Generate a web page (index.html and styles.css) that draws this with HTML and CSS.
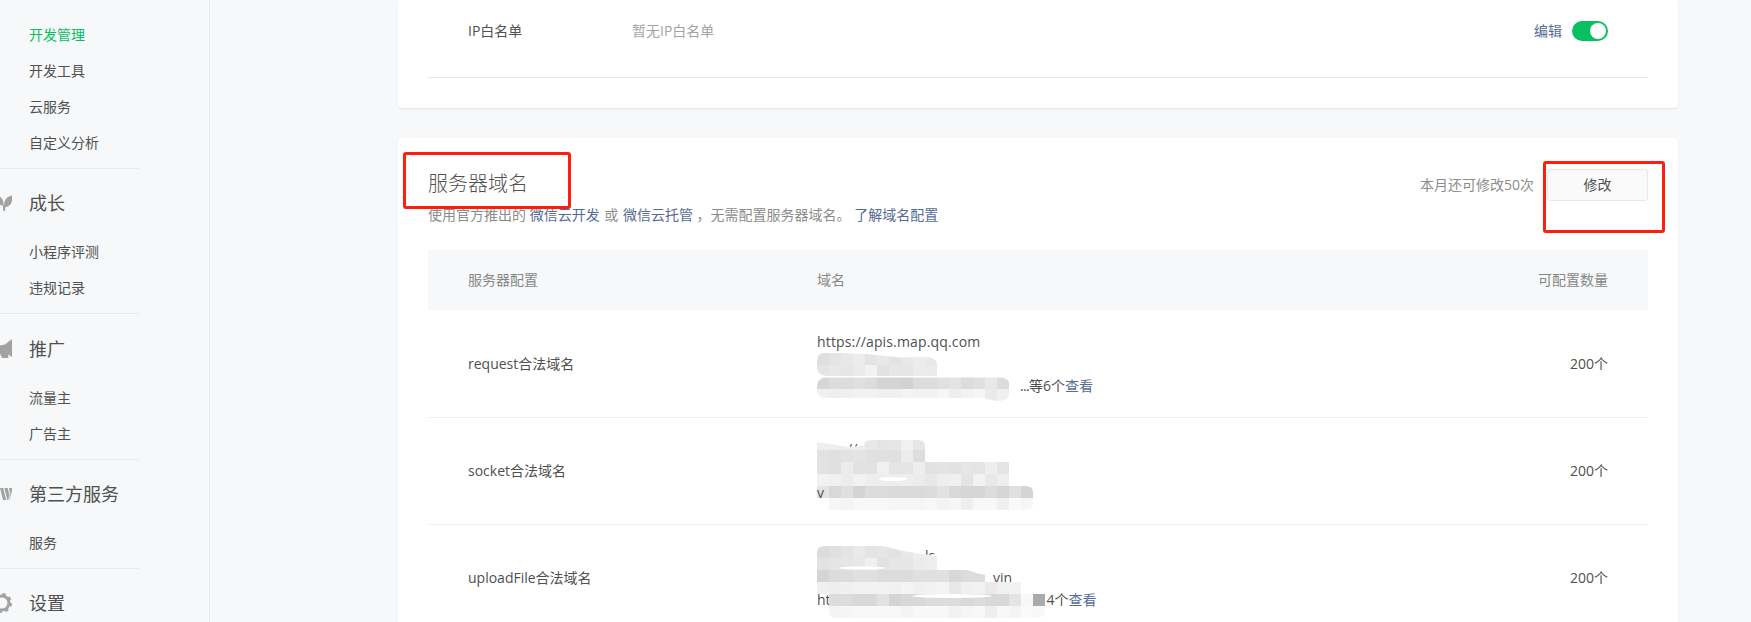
FILE: index.html
```html
<!DOCTYPE html>
<html lang="zh-CN">
<head>
<meta charset="utf-8">
<title>开发管理</title>
<link rel="stylesheet" href="styles.css">
</head>
<body>
<div class="page">
  <nav class="side">
    <ul class="nav first">
      <li class="active">开发管理</li>
      <li>开发工具</li>
      <li>云服务</li>
      <li>自定义分析</li>
    </ul>
    <div class="group">
      <h3><svg class="ico leaf" viewBox="0 0 12 16"><path d="M4.500 12.500C3 6.500 6 1.300 12.500 .3 13 7 10.500 12 4.500 12.500z"/><path d="M0 1.500C2.800 3.800 4 7 3.400 10.500 1.800 10.500 .5 10 0 9.500z"/><path d="M3 10h2.200v5.800H3z"/></svg>成长</h3>
      <ul class="nav"><li>小程序评测</li><li>违规记录</li></ul>
    </div>
    <div class="group">
      <h3 class="tall"><svg class="ico horn" viewBox="0 0 12 20"><path d="M12 0v18L8 15.500 8.500 19H2L0 14.500V6.500L5 5.500z"/></svg>推广</h3>
      <ul class="nav"><li>流量主</li><li>广告主</li></ul>
    </div>
    <div class="group">
      <h3><svg class="ico tri" viewBox="0 0 12 12"><path d="M0 0h3.200l3 12H3zM4.300 0h3.400l1.800 7.500L8.200 12H7.300zM9 0h3.500L9.800 12H9.300L10.300 7.500z"/></svg>第三方服务</h3>
      <ul class="nav"><li>服务</li></ul>
    </div>
    <div class="group">
      <h3><svg class="ico gear" viewBox="0 0 12 20"><circle class="ring" cx="2" cy="10" r="7"/><circle class="teeth" cx="2" cy="10" r="9"/></svg>设置</h3>
    </div>
  </nav>

  <main class="main">
    <section class="card top">
      <div class="ip">
        <span class="ip-name">IP白名单</span>
        <span class="ip-val">暂无IP白名单</span>
        <a class="link ip-edit">编辑</a>
        <span class="toggle"><i></i></span>
      </div>
    </section>

    <section class="card domains">
      <div class="mark mark-title"></div>
      <div class="mark mark-btn"></div>
      <header class="head">
        <div>
          <h2>服务器域名</h2>
          <p class="sub">使用官方推出的 <a class="link">微信云开发</a> <span class="or">或</span> <a class="link">微信云托管</a> ，无需配置服务器域名。 <a class="link">了解域名配置</a></p>
        </div>
        <div class="ops">
          <span class="left">本月还可修改50次</span>
          <button class="btn">修改</button>
        </div>
      </header>

      <div class="row thead">
        <span>服务器配置</span><span>域名</span><span class="num">可配置数量</span>
      </div>

      <div class="row">
        <span>request合法域名</span>
        <div class="cell">
          <svg class="blur" width="240" height="107">
            <defs>
              <clipPath id="c1a"><path d="M0 50Q0 42 8 41.500L50 43 83 46.500 107 46Q120 46 120 54V65H12Q0 65 0 56z"/></clipPath>
              <clipPath id="c1b"><path d="M0 76Q0 66.500 10 66.500H183Q193 66.500 193 76V80Q193 90 180 90L165 87H10Q0 87 0 78z"/></clipPath>
            </defs>
            <g clip-path="url(#c1a)">
              <rect x="0" y="42" fill="#dfdfdf"/><rect x="12" y="42" fill="#e4e4e4"/><rect x="24" y="42" fill="#e8e8e8"/><rect x="36" y="42" fill="#ececec"/><rect x="48" y="42" fill="#e4e4e4"/><rect x="60" y="42" fill="#e8e8e8"/><rect x="72" y="42" fill="#e2e2e2"/><rect x="84" y="42" fill="#e8e8e8"/><rect x="96" y="42" fill="#ececec"/><rect x="108" y="42" fill="#e8e8e8"/>
              <rect x="0" y="54" fill="#e4e4e4"/><rect x="12" y="54" fill="#e8e8e8"/><rect x="24" y="54" fill="#e6e6e6"/><rect x="36" y="54" fill="#ebebeb"/><rect x="48" y="54" fill="#f2f2f2"/><rect x="60" y="54" fill="#e2e2e2"/><rect x="72" y="54" fill="#e7e7e7"/><rect x="84" y="54" fill="#e6e6e6"/><rect x="96" y="54" fill="#ececec"/><rect x="108" y="54" fill="#ebebeb"/>
            </g>
            <g clip-path="url(#c1b)">
              <rect x="0" y="66" fill="#d6d6d6"/><rect x="12" y="66" fill="#dcdcdc"/><rect x="24" y="66" fill="#dcdcdc"/><rect x="36" y="66" fill="#e0e0e0"/><rect x="48" y="66" fill="#dcdcdc"/><rect x="60" y="66" fill="#d4d4d4"/><rect x="72" y="66" fill="#d4d4d4"/><rect x="84" y="66" fill="#d2d2d2"/><rect x="96" y="66" fill="#dcdcdc"/><rect x="108" y="66" fill="#dcdcdc"/><rect x="120" y="66" fill="#e0e0e0"/><rect x="132" y="66" fill="#e4e4e4"/><rect x="144" y="66" fill="#dcdcdc"/><rect x="156" y="66" fill="#e0e0e0"/><rect x="168" y="66" fill="#e8e8e8"/><rect x="180" y="66" fill="#dcdcdc"/>
              <rect x="0" y="78" fill="#f0f0f0"/><rect x="12" y="78" fill="#eeeeee"/><rect x="24" y="78" fill="#f0f0f0"/><rect x="36" y="78" fill="#f2f2f2"/><rect x="48" y="78" fill="#f2f2f2"/><rect x="60" y="78" fill="#f0f0f0"/><rect x="72" y="78" fill="#f0f0f0"/><rect x="84" y="78" fill="#f4f4f4"/><rect x="96" y="78" fill="#f2f2f2"/><rect x="108" y="78" fill="#f2f2f2"/><rect x="120" y="78" fill="#f6f6f6"/><rect x="132" y="78" fill="#eeeeee"/><rect x="144" y="78" fill="#f2f2f2"/><rect x="156" y="78" fill="#f6f6f6"/><rect x="168" y="78" fill="#eaeaea"/><rect x="180" y="78" fill="#f0f0f0"/>
            </g>
          </svg>
          <div class="url">https://apis.map.qq.com</div>
          <div>&nbsp;</div>
          <div><span class="gap g1"></span><span class="dots">...</span>等6个<a class="link">查看</a></div>
        </div>
        <span class="num">200个</span>
      </div>

      <div class="row">
        <span>socket合法域名</span>
        <div class="cell">
          <svg class="blur" width="240" height="107">
            <defs>
              <clipPath id="c2"><path d="M0 24L31 29 46 28Q47 22 55 22H100Q108 22 108 28V44H192V68H208Q216 68 216 74V86Q216 92 208 92H11Q0 92 0 82z"/></clipPath>
            </defs>
            <g clip-path="url(#c2)">
              <rect x="0" y="20" fill="#eeeeee"/><rect x="12" y="20" fill="#eeeeee"/><rect x="24" y="20" fill="#eeeeee"/><rect x="36" y="20" fill="#eeeeee"/><rect x="48" y="20" fill="#e8e8e8"/><rect x="60" y="20" fill="#e4e4e4"/><rect x="72" y="20" fill="#e6e6e6"/><rect x="84" y="20" fill="#f0f0f0"/><rect x="96" y="20" fill="#e6e6e6"/>
              <rect x="0" y="32" fill="#e2e2e2"/><rect x="12" y="32" fill="#e0e0e0"/><rect x="24" y="32" fill="#e2e2e2"/><rect x="36" y="32" fill="#e4e4e4"/><rect x="48" y="32" fill="#e0e0e0"/><rect x="60" y="32" fill="#e0e0e0"/><rect x="72" y="32" fill="#e0e0e0"/><rect x="84" y="32" fill="#ececec"/><rect x="96" y="32" fill="#dddddd"/>
              <rect x="0" y="44" fill="#e2e2e2"/><rect x="12" y="44" fill="#e0e0e0"/><rect x="24" y="44" fill="#ececec"/><rect x="36" y="44" fill="#e2e2e2"/><rect x="48" y="44" fill="#e2e2e2"/><rect x="60" y="44" fill="#f0f0f0"/><rect x="72" y="44" fill="#e4e4e4"/><rect x="84" y="44" fill="#e4e4e4"/><rect x="96" y="44" fill="#eeeeee"/><rect x="108" y="44" fill="#e2e2e2"/><rect x="120" y="44" fill="#e4e4e4"/><rect x="132" y="44" fill="#e2e2e2"/><rect x="144" y="44" fill="#e6e6e6"/><rect x="156" y="44" fill="#e4e4e4"/><rect x="168" y="44" fill="#eeeeee"/><rect x="180" y="44" fill="#e4e4e4"/>
              <rect x="0" y="56" fill="#f2f2f2"/><rect x="12" y="56" fill="#f0f0f0"/><rect x="24" y="56" fill="#ececec"/><rect x="36" y="56" fill="#f2f2f2"/><rect x="48" y="56" fill="#eeeeee"/><rect x="60" y="56" fill="#eeeeee"/><rect x="72" y="56" fill="#eeeeee"/><rect x="84" y="56" fill="#eeeeee"/><rect x="96" y="56" fill="#ececec"/><rect x="108" y="56" fill="#e8e8e8"/><rect x="120" y="56" fill="#eeeeee"/><rect x="132" y="56" fill="#f0f0f0"/><rect x="144" y="56" fill="#e4e4e4"/><rect x="156" y="56" fill="#f2f2f2"/><rect x="168" y="56" fill="#e8e8e8"/><rect x="180" y="56" fill="#eeeeee"/>
              <rect x="0" y="68" fill="#e4e4e4"/><rect x="12" y="68" fill="#d8d8d8"/><rect x="24" y="68" fill="#e0e0e0"/><rect x="36" y="68" fill="#d4d4d4"/><rect x="48" y="68" fill="#dcdcdc"/><rect x="60" y="68" fill="#dcdcdc"/><rect x="72" y="68" fill="#dadada"/><rect x="84" y="68" fill="#dadada"/><rect x="96" y="68" fill="#dadada"/><rect x="108" y="68" fill="#dcdcdc"/><rect x="120" y="68" fill="#e2e2e2"/><rect x="132" y="68" fill="#d8d8d8"/><rect x="144" y="68" fill="#d6d6d6"/><rect x="156" y="68" fill="#d6d6d6"/><rect x="168" y="68" fill="#dcdcdc"/><rect x="180" y="68" fill="#d6d6d6"/><rect x="192" y="68" fill="#e0e0e0"/><rect x="204" y="68" fill="#d4d4d4"/>
              <rect x="0" y="80" fill="#ffffff"/><rect x="12" y="80" fill="#f6f6f6"/><rect x="24" y="80" fill="#f4f4f4"/><rect x="36" y="80" fill="#f8f8f8"/><rect x="48" y="80" fill="#f8f8f8"/><rect x="60" y="80" fill="#f8f8f8"/><rect x="72" y="80" fill="#f6f6f6"/><rect x="84" y="80" fill="#f6f6f6"/><rect x="96" y="80" fill="#f6f6f6"/><rect x="108" y="80" fill="#f8f8f8"/><rect x="120" y="80" fill="#f4f4f4"/><rect x="132" y="80" fill="#f6f6f6"/><rect x="144" y="80" fill="#eeeeee"/><rect x="156" y="80" fill="#f8f8f8"/><rect x="168" y="80" fill="#f8f8f8"/><rect x="180" y="80" fill="#f0f0f0"/><rect x="192" y="80" fill="#fafafa"/><rect x="204" y="80" fill="#f6f6f6"/>
              <ellipse cx="76" cy="61" rx="14" ry="2" fill="#ffffff"/>
            </g>
          </svg>
          <div><span class="gap g4"></span>//c</div>
          <div>&nbsp;</div>
          <div class="over">v</div>
        </div>
        <span class="num">200个</span>
      </div>

      <div class="row">
        <span>uploadFile合法域名</span>
        <div class="cell">
          <svg class="blur" width="240" height="107">
            <defs>
              <clipPath id="c3"><path d="M0 27Q0 21 8 21H66L86 26 120 31V45H150L163 49 204 56V69H228V86Q228 93 220 93H20Q12 93 12 86V69H0z"/></clipPath>
            </defs>
            <g clip-path="url(#c3)">
              <rect x="0" y="21" fill="#dcdcdc"/><rect x="12" y="21" fill="#e0e0e0"/><rect x="24" y="21" fill="#e4e4e4"/><rect x="36" y="21" fill="#eaeaea"/><rect x="48" y="21" fill="#e4e4e4"/><rect x="60" y="21" fill="#e6e6e6"/><rect x="72" y="21" fill="#e2e2e2"/><rect x="84" y="21" fill="#e8e8e8"/><rect x="96" y="21" fill="#eeeeee"/><rect x="108" y="21" fill="#eeeeee"/>
              <rect x="0" y="33" fill="#e2e2e2"/><rect x="12" y="33" fill="#e4e4e4"/><rect x="24" y="33" fill="#e6e6e6"/><rect x="36" y="33" fill="#e8e8e8"/><rect x="48" y="33" fill="#f0f0f0"/><rect x="60" y="33" fill="#e2e2e2"/><rect x="72" y="33" fill="#e6e6e6"/><rect x="84" y="33" fill="#e6e6e6"/><rect x="96" y="33" fill="#ececec"/><rect x="108" y="33" fill="#eeeeee"/>
              <rect x="0" y="45" fill="#d4d4d4"/><rect x="12" y="45" fill="#dcdcdc"/><rect x="24" y="45" fill="#dcdcdc"/><rect x="36" y="45" fill="#e0e0e0"/><rect x="48" y="45" fill="#e0e0e0"/><rect x="60" y="45" fill="#dcdcdc"/><rect x="72" y="45" fill="#dcdcdc"/><rect x="84" y="45" fill="#dcdcdc"/><rect x="96" y="45" fill="#e0e0e0"/><rect x="108" y="45" fill="#e0e0e0"/><rect x="120" y="45" fill="#e0e0e0"/><rect x="132" y="45" fill="#d8d8d8"/><rect x="144" y="45" fill="#dcdcdc"/><rect x="156" y="45" fill="#dcdcdc"/>
              <rect x="0" y="57" fill="#f0f0f0"/><rect x="12" y="57" fill="#eeeeee"/><rect x="24" y="57" fill="#f0f0f0"/><rect x="36" y="57" fill="#f2f2f2"/><rect x="48" y="57" fill="#f2f2f2"/><rect x="60" y="57" fill="#f2f2f2"/><rect x="72" y="57" fill="#f0f0f0"/><rect x="84" y="57" fill="#f4f4f4"/><rect x="96" y="57" fill="#f0f0f0"/><rect x="108" y="57" fill="#f2f2f2"/><rect x="120" y="57" fill="#f4f4f4"/><rect x="132" y="57" fill="#e8e8e8"/><rect x="144" y="57" fill="#f0f0f0"/><rect x="156" y="57" fill="#f2f2f2"/><rect x="168" y="57" fill="#eaeaea"/><rect x="180" y="57" fill="#f0f0f0"/><rect x="192" y="57" fill="#f2f2f2"/>
              <rect x="12" y="69" fill="#dcdcdc"/><rect x="24" y="69" fill="#dcdcdc"/><rect x="36" y="69" fill="#d8d8d8"/><rect x="48" y="69" fill="#d8d8d8"/><rect x="60" y="69" fill="#e2e2e2"/><rect x="72" y="69" fill="#d4d4d4"/><rect x="84" y="69" fill="#d8d8d8"/><rect x="96" y="69" fill="#d8d8d8"/><rect x="108" y="69" fill="#dcdcdc"/><rect x="120" y="69" fill="#dcdcdc"/><rect x="132" y="69" fill="#dcdcdc"/><rect x="144" y="69" fill="#d8d8d8"/><rect x="156" y="69" fill="#dcdcdc"/><rect x="168" y="69" fill="#d8d8d8"/><rect x="180" y="69" fill="#d8d8d8"/><rect x="192" y="69" fill="#e4e4e4"/><rect x="204" y="69" fill="#f8f8f8"/><rect x="216" y="69" fill="#aaaaaa"/>
              <rect x="12" y="81" fill="#f4f4f4"/><rect x="24" y="81" fill="#f6f6f6"/><rect x="36" y="81" fill="#f8f8f8"/><rect x="48" y="81" fill="#f8f8f8"/><rect x="60" y="81" fill="#f8f8f8"/><rect x="72" y="81" fill="#f8f8f8"/><rect x="84" y="81" fill="#f4f4f4"/><rect x="96" y="81" fill="#f8f8f8"/><rect x="108" y="81" fill="#f8f8f8"/><rect x="120" y="81" fill="#f8f8f8"/><rect x="132" y="81" fill="#f2f2f2"/><rect x="144" y="81" fill="#f6f6f6"/><rect x="156" y="81" fill="#f8f8f8"/><rect x="168" y="81" fill="#eeeeee"/><rect x="180" y="81" fill="#f8f8f8"/><rect x="192" y="81" fill="#f4f4f4"/><rect x="204" y="81" fill="#fafafa"/><rect x="216" y="81" fill="#f8f8f8"/>
              <ellipse cx="45" cy="43" rx="24" ry="1.500" fill="#ffffff"/>
              <ellipse cx="135" cy="71" rx="40" ry="2" fill="#ffffff"/>
            </g>
          </svg>
          <div><span class="gap g5"></span>ls</div>
          <div><span class="gap g2"></span>vin</div>
          <div>ht<span class="gap g3"></span>4个<a class="link">查看</a></div>
        </div>
        <span class="num">200个</span>
      </div>
    </section>
  </main>
</div>
</body>
</html>
```

FILE: styles.css
```css
* { box-sizing: border-box; }
html, body { margin: 0; height: 622px; overflow: hidden; }
body {
  background: #f6f8f9;
  color: #505050;
  font: 14px/20px "Open Sans", "Noto Sans CJK SC", sans-serif;
}
ul { list-style: none; margin: 0; padding: 0; }
h2, h3, p { margin: 0; font-weight: 400; }
a { text-decoration: none; }
.link { color: #576b95; }

.page { display: flex; height: 622px; }

/* sidebar */
.side {
  flex: 0 0 210px;
  padding-top: 17px;
  border-right: 1px solid #e7e8ea;
}
.nav li { height: 36px; line-height: 36px; padding-left: 29px; color: #505050; }
.nav li.active { color: #07c160; }
.nav { width: 139px; }
.group { width: 139px; margin-top: 7px; border-top: 1px solid #e7e8ea; }
.group h3 {
  display: flex;
  align-items: center;
  height: 65px;
  padding-top: 3px;
  font-size: 18px;
  color: #505050;
}
.group h3.tall { height: 66px; }
.ico { flex: none; width: 12px; margin-right: 17px; fill: #a2a2a2; }
.leaf { height: 16px; }
.horn { height: 20px; }
.tri { height: 12px; }
.gear { height: 20px; overflow: hidden; }
.ring { fill: none; stroke: #a2a2a2; stroke-width: 3; }
.teeth { fill: none; stroke: #a2a2a2; stroke-width: 2; stroke-dasharray: 3.500 3.570; }

/* main */
.main { flex: 1; padding: 0 73px 0 188px; }
.card {
  position: relative;
  padding: 0 30px;
  background: #fff;
  border-radius: 4px;
  box-shadow: 0 1px 2px rgba(0, 0, 0, .09);
}
.card.top { height: 108px; border-radius: 0 0 4px 4px; }
.ip {
  display: flex;
  align-items: center;
  height: 78px;
  padding: 0 40px 16px;
  border-bottom: 1px solid #e7e7e7;
}
.ip-name { width: 164px; }
.ip-val { color: #a3a3a3; }
.ip-edit { margin-left: auto; }
.toggle {
  display: flex;
  justify-content: flex-end;
  align-items: center;
  width: 36px;
  height: 20px;
  margin-left: 10px;
  padding-right: 2px;
  border-radius: 10px;
  background: #07c160;
}
.toggle i { width: 16px; height: 16px; border-radius: 50%; background: #fff; }

.domains { margin-top: 30px; padding-top: 31px; height: 520px; }
.head { display: flex; justify-content: space-between; align-items: flex-start; }
.head h2 { margin-top: 1px; font-size: 20px; font-weight: 300; line-height: 28px; color: #505050; }
.sub { margin-top: 7px; color: #8c8c8c; }
.or { margin: 0 1px; }
.ops { display: flex; align-items: center; }
.left { color: #8c8c8c; margin-right: 13px; }
.btn {
  width: 101px;
  height: 32px;
  padding: 0;
  border: 1px solid #e8e8e8;
  border-radius: 3px;
  background: #fafafa;
  color: #505050;
  font: inherit;
}

.row {
  display: grid;
  grid-template-columns: 349px 1fr auto;
  align-items: center;
  height: 107px;
  padding: 0 40px;
  border-bottom: 1px solid #f0f0f0;
}
.thead {
  height: 60px;
  margin-top: 25px;
  margin-bottom: 1px;
  background: #f6f8f9;
  border-bottom: 0;
  color: #888;
}
.num { text-align: right; }
.cell { position: relative; line-height: 22px; align-self: stretch; padding-top: 20px; }
.url { letter-spacing: .15px; }
.dots { letter-spacing: -.7px; }
.over { position: relative; }
.blur { position: absolute; left: 0; top: 0; }
.blur rect { width: 12px; height: 12px; }
.gap { display: inline-block; }
.g1 { width: 203px; }
.g2 { width: 176px; }
.g3 { width: 216px; }
.g4 { width: 30px; }
.g5 { width: 108px; }

/* annotation boxes */
.mark {
  position: absolute;
  z-index: 2;
  border: 3px solid #ff1d0e;
  border-radius: 3px;
}
.mark-title { left: 5px; top: 14px; width: 168px; height: 57px; }
.mark-btn { left: 1145px; top: 23px; width: 122px; height: 72px; }
```
